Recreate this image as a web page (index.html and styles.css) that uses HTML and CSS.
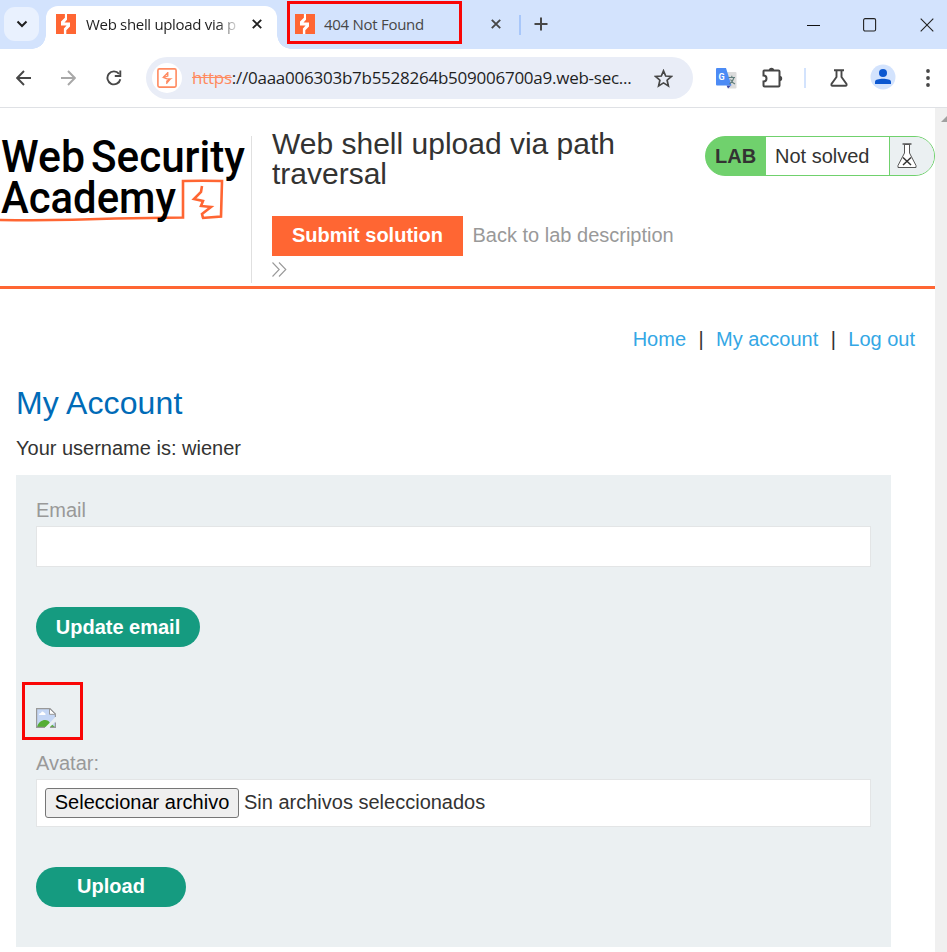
FILE: index.html
```html
<!DOCTYPE html>
<html lang="es">
<head>
<meta charset="utf-8">
<title>Web shell upload via path traversal</title>
<link rel="stylesheet" href="styles.css">
</head>
<body>
<svg width="0" height="0" class="defs">
  <symbol id="favicon" viewBox="0 0 20 20"><rect width="20" height="20" fill="#ff6633"/><path d="M8.9 0H11V5.8L8.5 8.4H14V12.5L10.3 16.2V20H7.9V14.4L10.6 11.6H5V7.5L8.9 3.7Z" fill="#fff"/></symbol>
</svg>
<header class="tabs">
  <button class="tab-search"><svg width="12" height="8" viewBox="0 0 12 8"><path d="M1.5 1.5L6 6L10.5 1.5" fill="none" stroke="#1f1f1f" stroke-width="2"/></svg></button>
  <div class="tab active">
    <svg width="20" height="20"><use href="#favicon"/></svg>
    <span class="tab-title">Web shell upload via p</span>
    <svg class="close" width="10" height="10" viewBox="0 0 10 10"><path d="M.8 .8L9.2 9.2M9.2 .8L.8 9.2" stroke="#1f1f1f" stroke-width="1.9"/></svg>
  </div>
  <div class="tab second">
    <svg width="20" height="20"><use href="#favicon"/></svg>
    <span class="tab-title">404 Not Found</span>
    <svg class="close" width="10" height="10" viewBox="0 0 10 10"><path d="M.8 .8L9.2 9.2M9.2 .8L.8 9.2" stroke="#474747" stroke-width="1.9"/></svg>
    <span class="mark mark-tab"></span>
  </div>
  <span class="tab-sep"></span>
  <svg class="plus" width="14" height="14" viewBox="0 0 14 14"><path d="M7 .5V13.5M.5 7H13.5" stroke="#474747" stroke-width="2"/></svg>
  <div class="window-controls">
    <svg width="14" height="14" viewBox="0 0 14 14"><path d="M1 7.5H14" stroke="#111" stroke-width="1"/></svg>
    <svg width="14" height="14" viewBox="0 0 14 14"><rect x=".6" y=".6" width="12" height="12.4" rx="1.5" fill="none" stroke="#222" stroke-width="1.1"/></svg>
    <svg width="14" height="14" viewBox="0 0 14 14"><path d="M.7 .7L13.3 13.3M13.3 .7L.7 13.3" stroke="#222" stroke-width="1.1"/></svg>
  </div>
</header>
<div class="toolbar">
  <svg class="back" width="16" height="16" viewBox="0 0 16 16"><path d="M15 8H1.5M8 1L1.2 8L8 15" fill="none" stroke="#474747" stroke-width="1.9"/></svg>
  <svg class="forward" width="16" height="16" viewBox="0 0 16 16"><path d="M1 8H14.5M8 1L14.8 8L8 15" fill="none" stroke="#a8a8a8" stroke-width="1.9"/></svg>
  <svg class="reload" width="16" height="16" viewBox="0 0 16 16"><path d="M14.3 9.2A6.5 6.5 0 1 1 13 3.8" fill="none" stroke="#474747" stroke-width="1.9"/><path d="M14.3 .5V6H8.8" fill="none" stroke="#474747" stroke-width="1.9"/></svg>
  <div class="address">
    <span class="site"><svg width="20" height="20" viewBox="0 0 20 20"><rect x=".9" y=".9" width="18.2" height="18.2" rx="1.5" fill="none" stroke="#ff8a60" stroke-width="1.6"/><path d="M10.800 4V8L6.500 9.500L10 10.800H13.500L9.800 13V16M10.500 5L6.300 9.300M13.500 10.800L9.600 15.200" fill="none" stroke="#ff8a60" stroke-width="1.300"/></svg></span>
    <span class="url"><s>https</s>://0aaa006303b7b5528264b509006700a9.web-sec...</span>
    <svg class="star" width="19" height="19" viewBox="0 0 19 19"><path d="M9.5 1.8L11.7 7L17.3 7.5L13.1 11.2L14.4 16.9L9.5 13.9L4.6 16.9L5.9 11.2L1.7 7.5L7.3 7Z" fill="none" stroke="#474747" stroke-width="1.7"/></svg>
  </div>
  <svg class="translate" width="21" height="21" viewBox="0 0 21 21"><path d="M8 4H19.5Q20.5 4 20.5 5V19.5Q20.5 20.5 19.5 20.5H12Z" fill="#dcdcdc"/><path d="M10.5 17.500H15L12 20.500Z" fill="#3949ab"/><path d="M1 0H10L15.500 17.500H1Q0 17.500 0 16.500V1Q0 0 1 0Z" fill="#4c8bf5"/><text x="2.400" y="12.200" class="g">G</text><path d="M12.500 9.500H19M15.800 7.800V9.500M18 9.500Q17 13.500 13.500 16M14.500 11.500Q16 14.500 19 16" fill="none" stroke="#607d7b" stroke-width="1.100"/></svg>
  <svg class="puzzle" width="22" height="22" viewBox="0 0 22 22"><path d="M2.500 3.500H17.500Q18.500 3.500 18.500 4.500V18.500Q18.500 19.500 17.500 19.500H3.500Q2.500 19.500 2.500 18.500V14.500C6.500 14.500 6.500 8.500 2.500 8.500V4.500Q2.500 3.500 3.500 3.500" fill="none" stroke="#474747" stroke-width="2"/><path d="M7.800 3.500A2.700 2.700 0 0 1 13.200 3.500ZM18.500 8.800A2.700 2.700 0 0 1 18.500 14.200Z" fill="#474747"/></svg>
  <span class="tool-sep"></span>
  <svg class="flask" width="18" height="18" viewBox="0 0 18 18"><path d="M4 1.200H14M6.500 1.500V8L1.500 15Q1 16.800 2.500 16.800H15.500Q17 16.800 16.500 15L11.500 8V1.500" fill="none" stroke="#474747" stroke-width="1.900"/></svg>
  <svg class="profile" width="26" height="26" viewBox="0 0 26 26"><circle cx="13" cy="13" r="12.500" fill="#d3e3fd"/><circle cx="13" cy="9" r="4" fill="#0b57d0"/><path d="M5 20V17.500C5 13.700 21 13.700 21 17.500V20Z" fill="#0b57d0"/></svg>
  <svg class="dots" width="6" height="20" viewBox="0 0 6 20"><g fill="#474747"><circle cx="3" cy="3" r="1.900"/><circle cx="3" cy="10" r="1.900"/><circle cx="3" cy="17" r="1.900"/></g></svg>
</div>
<div class="viewport">
  <div class="page">
    <section class="lab-header">
      <svg class="logo" width="251" height="100" viewBox="0 0 251 100">
        <path d="M0 90Q55 91 115 88.500L183 87.500V51Q202 50.500 222 51L221 86.500L202 88" fill="none" stroke="#ff6633" stroke-width="2.600"/>
        <path d="M202 56L201 62L194 69L203 71L201 76L211 77L202 84L203 88" fill="none" stroke="#ff6633" stroke-width="2.600"/>
        <text><tspan x="1" y="42" textLength="84" lengthAdjust="spacingAndGlyphs">Web</tspan><tspan x="91" y="42" textLength="154" lengthAdjust="spacingAndGlyphs">Security</tspan><tspan x="1" y="83" textLength="175" lengthAdjust="spacingAndGlyphs">Academy</tspan></text>
      </svg>
      <div class="lab-title">
        <h2>Web shell upload via path traversal</h2>
        <div class="lab-actions"><a class="submit">Submit solution</a><a class="back-link">Back to lab description</a></div>
        <svg class="chevrons" width="15" height="15" viewBox="0 0 15 15"><path d="M.5 .5L7.200 7.500L.5 14.500M7 .5L13.800 7.500L7 14.500" fill="none" stroke="#999" stroke-width="1.100"/></svg>
      </div>
      <div class="status"><b>LAB</b><span>Not solved</span><i><svg width="20" height="26" viewBox="0 0 20 26"><path d="M7.500 1.500V10L1 22.500V24.500H19V22.500L12.500 10V1.500Z" fill="#fff" stroke="#555" stroke-width="1"/><path d="M5.500 1H14.500" stroke="#555" stroke-width="1.500"/><path d="M6 14.500L14 22M14 14.500L6 22" stroke="#333" stroke-width="1.500"/></svg></i></div>
    </section>
    <nav><a>Home</a><span>|</span><a>My account</a><span>|</span><a>Log out</a></nav>
    <main>
      <h1>My Account</h1>
      <p>Your username is: wiener</p>
      <div class="panel">
        <label>Email</label>
        <div class="field"></div>
        <button class="pill update">Update email</button>
        <div class="avatar">
          <svg width="20" height="20" viewBox="0 0 20 20"><path d="M.6 .6H14L19.400 6V19.400H.6Z" fill="#c5d7f5"/><path d="M3 7Q3 5 5 5Q6 2.500 8 4.500Q10 5 9.500 7Z" fill="#fff"/><path d="M1 19C3 11 12 10 14 15L19 19Z" fill="#55ad35"/><path d="M8.500 20L20 8.500V13L13 20Z" fill="#ebf0f2"/><path d="M.6 20V.6H14L19.400 6V9M9 19.400H.6M19.400 14.500V19.400H14" fill="none" stroke="#999" stroke-width="1.200"/><path d="M13.500 .6V6.300H19.400Z" fill="#fff" stroke="#999"/></svg>
          <span class="mark mark-avatar"></span>
        </div>
        <label>Avatar:</label>
        <div class="file"><button>Seleccionar archivo</button><span>Sin archivos seleccionados</span></div>
        <button class="pill upload">Upload</button>
      </div>
    </main>
  </div>
  <div class="scrollbar"><svg width="12" height="8" viewBox="0 0 12 8"><path d="M6 7L12 1V7Z" fill="#a0a0a0"/></svg></div>
</div>
</body>
</html>
```
FILE: styles.css
```css
* { box-sizing: border-box; }
body { margin: 0; width: 947px; height: 952px; overflow: hidden; background: #fff; color: #333332; font: 20px/30px "Liberation Sans", Arial, sans-serif; }
svg { display: block; flex: none; }
.defs { position: absolute; }
button { font: inherit; border: 0; padding: 0; }
.tabs { display: flex; align-items: center; height: 49px; background: #d3e3fd; font: 15px/20px "Open Sans", "Noto Sans", sans-serif; }
.tab-search { display: flex; align-items: center; justify-content: center; width: 35px; height: 34px; margin: 0 0 1px 4px; border-radius: 11px; background: #e9f1fe; }
.tab { position: relative; display: flex; align-items: center; }
.tab.active { align-self: flex-end; width: 231px; height: 43px; margin-left: 7px; padding: 0 15px 7px 10px; border-radius: 12px 12px 0 0; background: #fff; color: #1f1f1f; }
.tab.active::before, .tab.active::after { content: ""; position: absolute; bottom: 0; width: 14px; height: 14px; }
.tab.active::before { left: -14px; background: radial-gradient(circle at 0 0, transparent 13.5px, #fff 14px); }
.tab.active::after { right: -14px; background: radial-gradient(circle at 100% 0, transparent 13.5px, #fff 14px); }
.tab-title { margin-left: 10px; overflow: hidden; white-space: nowrap; letter-spacing: -0.28px; }
.tab.active .tab-title { width: 151px; letter-spacing: -0.32px; mask-image: linear-gradient(to right, #000 132px, transparent 154px); }
.close { margin-left: auto; }
.tab.second { width: 206px; height: 43px; margin: -2px 0 0 18px; color: #474747; }
.tab.second .tab-title { margin-left: 9px; }
.tab-sep { width: 2px; height: 20px; margin-left: 18px; background: #a8c7fa; }
.plus { margin: -2px 0 0 13px; }
.mark { position: absolute; border: 3px solid #f90606; }
.mark-tab { left: -8px; top: -1px; width: 175px; height: 43px; }
.window-controls { display: flex; gap: 43px; margin: 0 13px 0 auto; }
.toolbar { display: flex; align-items: center; height: 59px; border-bottom: 1px solid #dfe1e5; background: #fff; }
.back { margin-left: 16px; }
.forward { margin-left: 28px; }
.reload { margin-left: 30px; }
.address { display: flex; align-items: center; width: 547px; height: 42px; margin-left: 24px; padding: 0 20px 0 6px; border-radius: 21px; background: #e9edf7; }
.site { display: flex; align-items: center; justify-content: center; width: 30px; height: 30px; border-radius: 50%; background: #fff; }
.url { margin-left: 10px; color: #1f1f1f; font: 17px/24px "Open Sans", "Noto Sans", sans-serif; letter-spacing: -0.25px; white-space: nowrap; }
.url s { color: #ff8a60; }
.star { margin-left: auto; }
.translate { margin-left: 23px; }
.g { fill: #fff; font: bold 9px Roboto, sans-serif; }
.puzzle { margin-left: 24px; }
.tool-sep { width: 2px; height: 20px; margin-left: 21px; background: #d3e3fd; }
.flask { margin-left: 24px; }
.profile { margin: -2px 0 0 22px; }
.dots { margin-left: 29px; }
.viewport { display: flex; height: 844px; }
.page { width: 935px; }
.scrollbar { width: 12px; padding-top: 7px; background: #f0f0f0; }
.lab-header { display: flex; height: 181px; border-bottom: 3px solid #ff6633; }
.logo { margin-top: 22px; }
.logo text { font: 500 44px Roboto, sans-serif; fill: #000; }
.lab-title { width: 433px; height: 147px; margin-top: 28px; padding-left: 20px; border-left: 1px solid #e0e0e0; }
h2 { width: 360px; margin: -7px 0 0; font-size: 30px; font-weight: 400; line-height: 30px; }
.lab-actions { display: flex; height: 40px; margin-top: 27px; line-height: 38px; }
.submit { width: 191px; background: #ff6633; color: #fff; font-weight: 700; text-align: center; }
.back-link { margin-left: 9.5px; color: #999; }
.chevrons { margin-top: 6px; }
.status { display: flex; width: 230px; height: 40px; margin: 28px 0 0 21px; overflow: hidden; border: 1px solid #70d16d; border-radius: 20px; line-height: 38px; background: linear-gradient(to right, #70d16d 50%, #ebf0f2 50%); }
.status b { width: 60px; padding-left: 9px; background: #70d16d; }
.status span { width: 123px; padding-left: 9px; background: #fff; }
.status i { display: flex; flex: 1; padding: 6px 0 0 7px; border-left: 1px solid #70d16d; background: #ebf0f2; }
nav { display: flex; justify-content: flex-end; gap: 12.4px; padding: 35px 20px 0 0; }
nav a { color: #34a7e5; }
main { padding: 30px 0 0 16px; }
h1 { margin: 0; color: #006bb7; font-size: 32px; font-weight: 400; line-height: 38px; letter-spacing: .1px; }
p { margin: 11px 0 12px; }
.panel { width: 875px; padding: 20px 20px 40px; background: #ebf0f2; }
label { display: block; height: 31px; color: #999; }
.field { height: 41px; border: 1px solid #e3e5e6; background: #fff; }
.pill { display: block; height: 40px; margin-top: 40px; border-radius: 20px; background: #159b80; color: #fff; font-weight: 700; }
.update { width: 164px; }
.upload { width: 150px; padding-bottom: 2px; }
.avatar { position: relative; width: 20px; margin: 61px 0 20px; }
.mark-avatar { left: -14px; top: -26px; width: 61px; height: 58px; }
.file { display: flex; gap: 5px; height: 48px; padding: 8px; border: 1px solid #e3e5e6; background: #fff; }
.file button { width: 194px; height: 30px; padding-bottom: 2px; border: 1px solid #767676; border-radius: 3px; background: #efefef; color: #000; line-height: 26px; }
.file span { line-height: 28px; }
```
